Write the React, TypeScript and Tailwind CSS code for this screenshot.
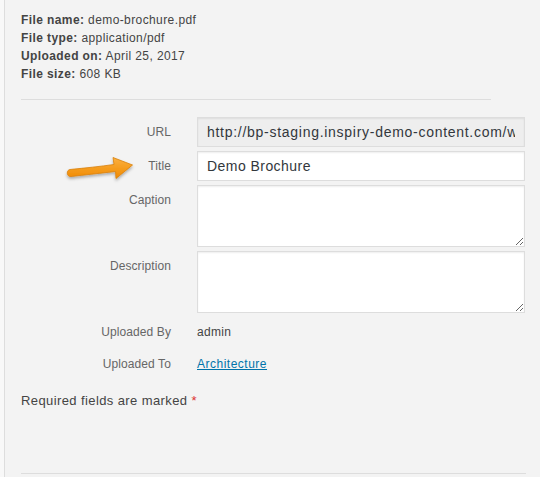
import React from 'react'

const url =
  'http://bp-staging.inspiry-demo-content.com/wp-content/uploads/2017/04/demo-brochure.pdf'

function Arrow() {
  return (
    <svg
      className="absolute left-[60px] top-[150px]"
      width="84"
      height="40"
      viewBox="60 150 84 40"
    >
      <defs>
        <linearGradient id="arrowFill" x1="0" y1="0" x2="0" y2="1">
          <stop offset="0" stopColor="#fbb040" />
          <stop offset="1" stopColor="#f08a00" />
        </linearGradient>
        <filter id="arrowShadow" x="-20%" y="-30%" width="140%" height="170%">
          <feDropShadow dx="0" dy="2" stdDeviation="1.5" floodColor="#000" floodOpacity="0.3" />
        </filter>
      </defs>
      <g filter="url(#arrowShadow)">
        <path
          d="M70 169.5 C 85 168, 100 166.5, 114 164.5 L 113 157.5 L 132.5 165 L 116 178.5 L 115.5 171.5 C 101 173, 86 175, 71 176.5 C 66.5 177, 66 170, 70 169.5 Z"
          fill="url(#arrowFill)"
          stroke="#d9800a"
          strokeWidth="0.8"
          strokeLinejoin="round"
        />
      </g>
    </svg>
  )
}

function Row({
  label,
  children,
  className = '',
}: {
  label: string
  children: React.ReactNode
  className?: string
}) {
  return (
    <div className={`flex ${className}`}>
      <div className="w-[150px] shrink-0 text-right text-[12px] leading-[30px] tracking-[0.1px] text-[#666]">
        {label}
      </div>
      <div className="ml-[26px] w-[328px]">{children}</div>
    </div>
  )
}

export default function App() {
  return (
    <div
      className="relative flex w-[540px] h-[477px] overflow-hidden bg-[#f3f3f3] text-[#444]"
      style={{ fontFamily: '"Liberation Sans", Arial, sans-serif' }}
    >
      <div className="w-[5px] shrink-0 bg-[#f8f8f8] border-r border-[#dddddd]" />

      <div className="flex flex-col pl-[16px]">
        <div className="pt-[11px] text-[12px] leading-[18px] tracking-[0.4px] text-[#444]">
          <div>
            <strong>File name:</strong> demo-brochure.pdf
          </div>
          <div>
            <strong>File type:</strong> application/pdf
          </div>
          <div>
            <strong>Uploaded on:</strong> April 25, 2017
          </div>
          <div>
            <strong>File size:</strong> 608 KB
          </div>
        </div>

        <div className="mt-[16px] h-px w-[470px] bg-[#dddddd]" />

        <div className="mt-[17px] flex flex-col gap-[4px]">
          <Row label="URL">
            <input
              readOnly
              value={url}
              className="block h-[30px] w-full border border-[#dddddd] bg-[#eeeeee] pl-[9px] pr-[9px] text-[14px] tracking-[0.72px] text-[#32373c] outline-none shadow-[inset_0_1px_2px_rgba(0,0,0,0.07)]"
            />
          </Row>
          <Row label="Title">
            <input
              defaultValue="Demo Brochure"
              className="block h-[30px] w-full border border-[#dddddd] bg-white pl-[9px] pr-[9px] text-[14px] tracking-[0.45px] text-[#32373c] outline-none shadow-[inset_0_1px_2px_rgba(0,0,0,0.07)]"
            />
          </Row>
          <Row label="Caption">
            <textarea className="block h-[62px] w-full border border-[#dddddd] bg-white outline-none shadow-[inset_0_1px_2px_rgba(0,0,0,0.07)]" />
          </Row>
          <Row label="Description">
            <textarea className="block h-[62px] w-full border border-[#dddddd] bg-white outline-none shadow-[inset_0_1px_2px_rgba(0,0,0,0.07)]" />
          </Row>
          <Row label="Uploaded By">
            <div className="text-[12px] leading-[30px] tracking-[0.3px] text-[#444]">admin</div>
          </Row>
          <Row label="Uploaded To" className="-mt-[2px]">
            <a
              href="#"
              className="text-[12px] leading-[30px] tracking-[0.5px] text-[#0073aa] underline"
            >
              Architecture
            </a>
          </Row>
        </div>

        <p className="mt-[13px] text-[13px] leading-[18px] tracking-[0.4px] text-[#444]">
          Required fields are marked <span className="text-[#dc3232]">*</span>
        </p>

        <div className="mt-[63px] h-px w-[505px] bg-[#dddddd]" />
      </div>

      <Arrow />
    </div>
  )
}
